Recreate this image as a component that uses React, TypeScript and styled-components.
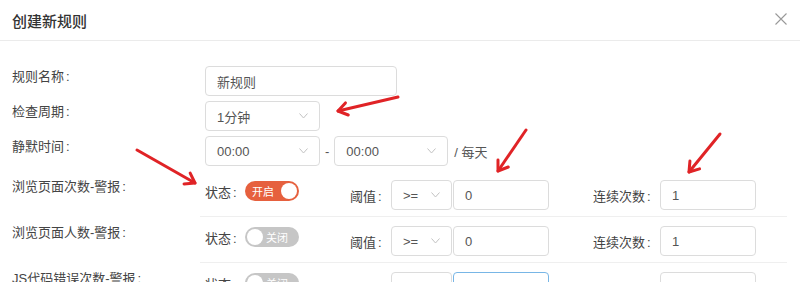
import styled, { createGlobalStyle } from "styled-components";

const GlobalStyle = createGlobalStyle`
  html, body {
    margin: 0;
    padding: 0;
    background: #fff;
    overflow: hidden;
  }
  body {
    font-family: "Liberation Sans", "Noto Sans CJK SC", sans-serif;
    font-size: 13px;
    color: #444;
  }
`;

const Modal = styled.div`
  position: relative;
  width: 800px;
  height: 282px;
  overflow: hidden;
  background: #fff;
`;

const Header = styled.header`
  height: 40px;
  padding: 0 12px;
  display: flex;
  align-items: center;
  justify-content: space-between;
  border-bottom: 1px solid #ebebeb;
`;

const Title = styled.h1`
  margin: 0;
  font-size: 15px;
  font-weight: 500;
  color: #333;
`;

const CloseBtn = styled.button`
  width: 14px;
  height: 14px;
  padding: 0;
  border: none;
  background: none;
  display: flex;
  align-items: center;
  justify-content: center;
  margin-top: -2px;
`;

const Body = styled.div`
  padding: 25px 12px 0;
`;

const FormRow = styled.div`
  display: grid;
  grid-template-columns: 188px 1fr;
  margin-bottom: 5px;
  &:last-of-type {
    margin-bottom: 0;
  }
`;

const Label = styled.div<{ $top: number }>`
  padding-top: ${(p) => p.$top}px;
  line-height: 18px;
  color: #444;
  white-space: nowrap;
`;

const Colon = styled.span`
  margin-left: 2px;
`;

const Field = styled.div`
  display: flex;
  align-items: center;
  padding-left: 5px;
`;

const Box = styled.div<{ $w: number; $focus?: boolean; $ml?: number }>`
  box-sizing: border-box;
  width: ${(p) => p.$w}px;
  height: 30px;
  margin-left: ${(p) => p.$ml || 0}px;
  padding: 0 11px;
  border: 1px solid ${(p) => (p.$focus ? "#78b6e6" : "#dcdcdc")};
  border-radius: 4px;
  display: flex;
  align-items: center;
  justify-content: space-between;
  color: #555;
  font-size: 13px;
  background: #fff;
  flex-shrink: 0;
`;

const Dash = styled.span`
  margin: 0 5px;
  color: #555;
`;

const Suffix = styled.span`
  margin-left: 6px;
  color: #555;
`;

const AlertRow = styled.div`
  display: grid;
  grid-template-columns: 188px 1fr;
`;

const AlertBody = styled.div`
  display: flex;
  align-items: flex-start;
  padding: 9px 0 6px 5px;
  margin-right: 1px;
  border-bottom: 1px solid #efefef;
`;

const Group = styled.div<{ $w?: number; $h: number; $mt?: number }>`
  display: flex;
  align-items: center;
  height: ${(p) => p.$h}px;
  margin-top: ${(p) => p.$mt || 0}px;
  width: ${(p) => (p.$w ? `${p.$w}px` : "auto")};
  flex-shrink: 0;
`;

const InlineLabel = styled.span<{ $w: number }>`
  width: ${(p) => p.$w}px;
  color: #444;
  white-space: nowrap;
  flex-shrink: 0;
`;

const SwitchTrack = styled.div<{ $on: boolean }>`
  position: relative;
  box-sizing: border-box;
  width: 54px;
  height: 20px;
  border-radius: 10px;
  background: ${(p) => (p.$on ? "#e6603e" : "#c6c6c6")};
  display: flex;
  align-items: center;
  justify-content: ${(p) => (p.$on ? "flex-start" : "flex-end")};
  padding: ${(p) => (p.$on ? "0 0 0 7px" : "0 11px 0 0")};
  color: #fff;
  font-size: 11px;
`;

const Knob = styled.span<{ $on: boolean }>`
  position: absolute;
  top: 2px;
  ${(p) => (p.$on ? "right: 2px;" : "left: 2px;")}
  width: 16px;
  height: 16px;
  border-radius: 50%;
  background: #fff;
`;

const Overlay = styled.svg`
  position: absolute;
  left: 0;
  top: 0;
  pointer-events: none;
`;

function Chevron() {
  return (
    <svg width="9" height="6" viewBox="0 0 9 6">
      <polyline points="0.5,0.5 4.5,5 8.5,0.5" fill="none" stroke="#c2c2c2" strokeWidth="1" />
    </svg>
  );
}

function Select({ w, value, focus }: { w: number; value: string; focus?: boolean }) {
  return (
    <Box $w={w} $focus={focus}>
      <span>{value}</span>
      <Chevron />
    </Box>
  );
}

function Switch({ on }: { on: boolean }) {
  return (
    <SwitchTrack $on={on}>
      {on ? "开启" : "关闭"}
      <Knob $on={on} />
    </SwitchTrack>
  );
}

function Arrow({ x1, y1, x2, y2 }: { x1: number; y1: number; x2: number; y2: number }) {
  const a = Math.atan2(y2 - y1, x2 - x1);
  const len = 11;
  const spread = 0.6;
  const w1 = [x2 - len * Math.cos(a - spread), y2 - len * Math.sin(a - spread)];
  const w2 = [x2 - len * Math.cos(a + spread), y2 - len * Math.sin(a + spread)];
  return (
    <g stroke="#e02326" strokeWidth="3" strokeLinecap="round" strokeLinejoin="round" fill="none">
      <line x1={x1} y1={y1} x2={x2} y2={y2} />
      <polyline points={`${w1[0]},${w1[1]} ${x2},${y2} ${w2[0]},${w2[1]}`} />
    </g>
  );
}

interface IAlert {
  name: string;
  on: boolean;
  focus?: boolean;
}

const alerts: IAlert[] = [
  { name: "浏览页面次数-警报", on: true },
  { name: "浏览页面人数-警报", on: false },
  { name: "JS代码错误次数-警报", on: false, focus: true },
];

export default function App() {
  return (
    <Modal>
      <GlobalStyle />
      <Header>
        <Title>创建新规则</Title>
        <CloseBtn>
          <svg width="12" height="12" viewBox="0 0 12 12">
            <path d="M0.5 0.5 L11.5 11.5 M11.5 0.5 L0.5 11.5" stroke="#999" strokeWidth="1.1" />
          </svg>
        </CloseBtn>
      </Header>
      <Body>
        <FormRow>
          <Label $top={2}>规则名称<Colon>:</Colon></Label>
          <Field>
            <Box $w={192}>新规则</Box>
          </Field>
        </FormRow>
        <FormRow>
          <Label $top={2}>检查周期<Colon>:</Colon></Label>
          <Field>
            <Select w={115} value="1分钟" />
          </Field>
        </FormRow>
        <FormRow>
          <Label $top={2}>静默时间<Colon>:</Colon></Label>
          <Field>
            <Select w={115} value="00:00" />
            <Dash>-</Dash>
            <Select w={114} value="00:00" />
            <Suffix>/ 每天</Suffix>
          </Field>
        </FormRow>
        {alerts.map((al) => (
          <AlertRow key={al.name}>
            <Label $top={7}>{al.name}<Colon>:</Colon></Label>
            <AlertBody>
              <Group $w={145} $h={20} $mt={1}>
                <InlineLabel $w={40}>状态<Colon>:</Colon></InlineLabel>
                <Switch on={al.on} />
              </Group>
              <Group $w={243} $h={30}>
                <InlineLabel $w={41}>阈值<Colon>:</Colon></InlineLabel>
                <Select w={61} value=">=" />
                <Box $w={96} $focus={al.focus} $ml={1}>0</Box>
              </Group>
              <Group $h={30}>
                <InlineLabel $w={67}>连续次数<Colon>:</Colon></InlineLabel>
                <Box $w={96}>1</Box>
              </Group>
            </AlertBody>
          </AlertRow>
        ))}
      </Body>
      <Overlay width="800" height="282">
        <Arrow x1={398} y1={97} x2={338} y2={111} />
        <Arrow x1={137} y1={150} x2={195} y2={183} />
        <Arrow x1={526} y1={130} x2={498} y2={171} />
        <Arrow x1={720} y1={134} x2={689} y2={172} />
      </Overlay>
    </Modal>
  );
}
